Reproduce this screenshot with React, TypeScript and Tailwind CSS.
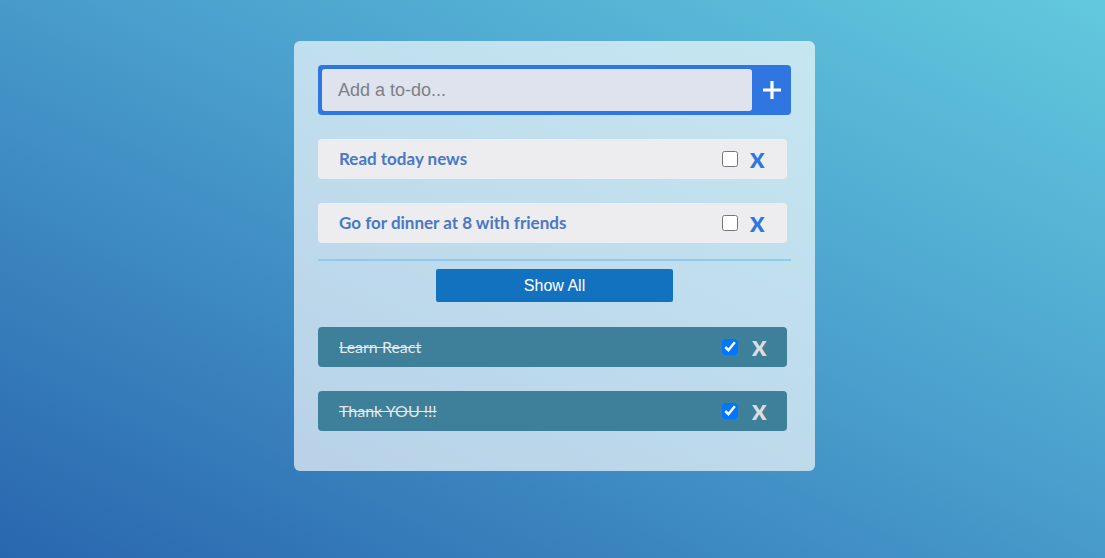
import { useState } from "react";

type Todo = { id: number; text: string; done: boolean };

const initial: Todo[] = [
  { id: 1, text: "Read today news", done: false },
  { id: 2, text: "Go for dinner at 8 with friends", done: false },
  { id: 3, text: "Learn React", done: true },
  { id: 4, text: "Thank YOU !!!", done: true },
];

const TodoRow = ({ todo, onToggle }: { todo: Todo; onToggle: () => void }) => {
  return (
    <div
      className={`flex items-center h-10 rounded pl-[21px] ${
        todo.done ? "bg-[#3e7f9a] pr-[23px]" : "bg-[#ededf0] pr-[25px]"
      }`}
    >
      <span
        className={`flex-1 font-['Lato',sans-serif] ${
          todo.done
            ? "text-[16px] text-[#e4e8ea] line-through"
            : "text-[17px] text-[#4a78c2] font-bold"
        }`}
      >
        {todo.text}
      </span>
      <input
        type="checkbox"
        checked={todo.done}
        onChange={onToggle}
        className="w-4 h-4 m-0 accent-[#0075ff]"
      />
      <button
        className={`w-3 text-[21px] leading-none font-extrabold font-['Lato',sans-serif] ${
          todo.done ? "text-[#dcdcdc] ml-[14px]" : "text-[#2f77e0] ml-3"
        }`}
      >
        X
      </button>
    </div>
  );
};

const App = () => {
  const [todos, setTodos] = useState(initial);
  const toggle = (id: number) =>
    setTodos(todos.map((t) => (t.id === id ? { ...t, done: !t.done } : t)));

  const open = todos.filter((t) => !t.done);
  const done = todos.filter((t) => t.done);

  return (
    <div className="min-h-[558px] w-full bg-[linear-gradient(to_top_right,#2966ae,#4a9fcd_55%,#62c9dd)] flex justify-center pt-[41px] pl-1">
      <div className="w-[521px] h-[430px] bg-white/65 rounded-md p-6 flex flex-col">
        <div className="flex h-[50px] bg-[#2f76e0] rounded p-1 pr-0">
          <input
            placeholder="Add a to-do..."
            className="flex-1 bg-[#dfe3ee] rounded-[3px] px-4 text-[18px] text-[#555] placeholder:text-[#7d7f86] outline-none font-['Liberation_Sans',Arial,sans-serif]"
          />
          <button className="w-[39px] flex items-center justify-center">
            <svg width="18" height="18" viewBox="0 0 18 18">
              <path d="M9 0v18M0 9h18" stroke="white" strokeWidth="3.2" />
            </svg>
          </button>
        </div>

        <div className="flex flex-col gap-6 mt-6 pr-1">
          {open.map((t) => (
            <TodoRow key={t.id} todo={t} onToggle={() => toggle(t.id)} />
          ))}
        </div>

        <div className="h-[2px] bg-[#8ecbef] mt-4" />

        <div className="flex justify-center mt-2">
          <button className="w-[237px] h-[33px] bg-[#1372c0] rounded-[2px] text-white text-[16px] font-['Liberation_Sans',Arial,sans-serif]">
            Show All
          </button>
        </div>

        <div className="flex flex-col gap-6 mt-[25px] pr-1">
          {done.map((t) => (
            <TodoRow key={t.id} todo={t} onToggle={() => toggle(t.id)} />
          ))}
        </div>
      </div>
    </div>
  );
};

export default App;
